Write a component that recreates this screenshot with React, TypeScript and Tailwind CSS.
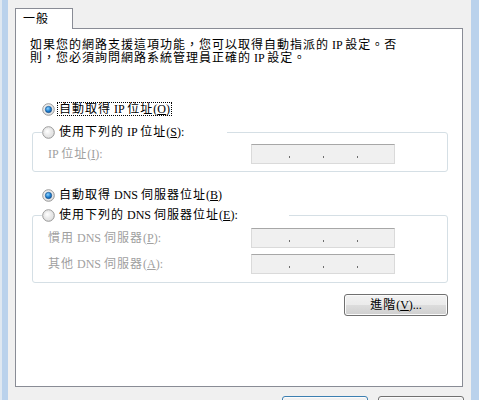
import React from 'react';

const FONT = "font-['Liberation_Serif','Noto_Sans_CJK_TC',serif] text-[12px] leading-[12px] tracking-[1px]";

// latin runs keep normal spacing, only the CJK glyphs are spread
const L = ({ children }: { children: React.ReactNode }) => <span className="tracking-normal">{children}</span>;

// Win7 style radio dot
const Radio = ({ checked }: { checked?: boolean }) => (
  <svg width="13" height="13" viewBox="0 0 13 13" className="shrink-0">
    <defs>
      <radialGradient id="rOff" cx="0.4" cy="0.4" r="0.7">
        <stop offset="0" stopColor="#ffffff" />
        <stop offset="1" stopColor="#d4d4d4" />
      </radialGradient>
      <radialGradient id="rOn" cx="0.4" cy="0.35" r="0.7">
        <stop offset="0" stopColor="#8fd3ff" />
        <stop offset="0.6" stopColor="#1d7fd0" />
        <stop offset="1" stopColor="#0d4f98" />
      </radialGradient>
    </defs>
    <circle cx="6.5" cy="6.5" r="5.8" fill="url(#rOff)" stroke="#9a9a9a" strokeWidth="1" />
    <circle cx="6.5" cy="6.5" r="4.2" fill="none" stroke="#e8e8e8" strokeWidth="0.8" />
    {checked && <circle cx="6.5" cy="6.5" r="3.2" fill="url(#rOn)" stroke="#1a4f84" strokeWidth="0.6" />}
  </svg>
);

const RadioRow = ({ checked, focus, children }: { checked?: boolean; focus?: boolean; children: React.ReactNode }) => (
  <div className="flex items-center h-[14px]">
    <Radio checked={checked} />
    <span className={`ml-[2px] px-[1px] leading-[12px] border whitespace-nowrap ${focus ? 'border-dotted border-black' : 'border-transparent'}`}>{children}</span>
  </div>
);

// disabled IP address box with three dots
const IpBox = () => (
  <div className="w-[144px] h-[20px] bg-[#f0f0f0] border border-[#dadada] border-t-[#a7a7a7] flex items-end pb-[5px] pl-[37px] gap-[33px]">
    <span className="w-[1px] h-[2px] bg-[#6d6d6d]" />
    <span className="w-[1px] h-[2px] bg-[#6d6d6d]" />
    <span className="w-[1px] h-[2px] bg-[#6d6d6d]" />
  </div>
);

const Field = ({ children }: { children: React.ReactNode }) => (
  <div className="flex items-center h-[20px]">
    <span className="w-[203px] text-[#a0a0a0] whitespace-nowrap">{children}</span>
    <IpBox />
  </div>
);

const btn = 'shrink-0 h-[22px] rounded-[3px] border bg-[linear-gradient(to_bottom,#f2f2f2_0%,#ebebeb_50%,#dddddd_50%,#cfcfcf_100%)] shadow-[inset_0_0_0_1px_#fbfbfb] flex items-center justify-center';

export default function App() {
  return (
    <div className={`flex h-[400px] overflow-hidden text-black ${FONT}`}>
      <div className="w-[2px] bg-[#dfe8f1]" />
      <div className="w-[6px] bg-[#bad2ec]" />

      <div className="w-[463px] bg-[#f0f0f0] pt-[8px] pl-[7px] pr-[8px] flex flex-col">
        {/* tab header */}
        <div className="relative z-10 shrink-0 -mb-px w-[58px] h-[21px] bg-white border-l border-t border-r border-[#898c95] pl-[7px] pt-[4px]">
          一般
        </div>

        {/* tab page */}
        <div className="shrink-0 h-[359px] bg-white border border-[#898c95] flex flex-col">
          <p className="mt-[10px] pl-[14px] whitespace-nowrap leading-[13px]">
            如果您的網路支援這項功能，您可以取得自動指派的<L> IP </L>設定。否<br />
            則，您必須詢問網路系統管理員正確的<L> IP </L>設定。
          </p>

          <div className="pl-[16px] pr-[14px] flex flex-col">
            <div className="mt-[37px] ml-[10px]">
              <RadioRow checked focus>自動取得<L> IP </L>位址<L>(<u>O</u>)</L></RadioRow>
            </div>

            <fieldset className="mt-[9px] border border-[#d5dfe5] rounded-[3px] pl-[9px] pb-[7px]">
              <legend className="w-[185px] h-[14px] bg-white">
                <RadioRow>使用下列的<L> IP </L>位址<L>(<u>S</u>):</L></RadioRow>
              </legend>
              <div className="pt-[5px] pl-[6px]">
                <Field><L>IP </L>位址<L>(<u>I</u>):</L></Field>
              </div>
            </fieldset>

            <div className="mt-[16px] ml-[10px]">
              <RadioRow checked>自動取得<L> DNS </L>伺服器位址<L>(<u>B</u>)</L></RadioRow>
            </div>

            <fieldset className="mt-[6px] border border-[#d5dfe5] rounded-[3px] pl-[9px] pb-[8px]">
              <legend className="w-[247px] h-[14px] bg-white">
                <RadioRow>使用下列的<L> DNS </L>伺服器位址<L>(<u>E</u>):</L></RadioRow>
              </legend>
              <div className="pt-[6px] pl-[6px] flex flex-col gap-[6px]">
                <Field>慣用<L> DNS </L>伺服器<L>(<u>P</u>):</L></Field>
                <Field>其他<L> DNS </L>伺服器<L>(<u>A</u>):</L></Field>
              </div>
            </fieldset>

            <div className="mt-[11px] flex justify-end">
              <button className={`${btn} w-[104px] border-[#707070]`}>進階<L>(<u>V</u>)...</L></button>
            </div>
          </div>
        </div>

        {/* dialog buttons, mostly cut off */}
        <div className="shrink-0 mt-[9px] -mr-px flex justify-end gap-[10px]">
          <button className={`${btn} w-[86px] h-[23px] border-[#3c7fb1] shadow-[inset_0_0_0_1px_#c8ecfa]`}>確定</button>
          <button className={`${btn} w-[86px] h-[23px] border-[#707070]`}>取消</button>
        </div>
      </div>

      <div className="w-[8px] bg-[#bad2ec]" />
    </div>
  );
}
